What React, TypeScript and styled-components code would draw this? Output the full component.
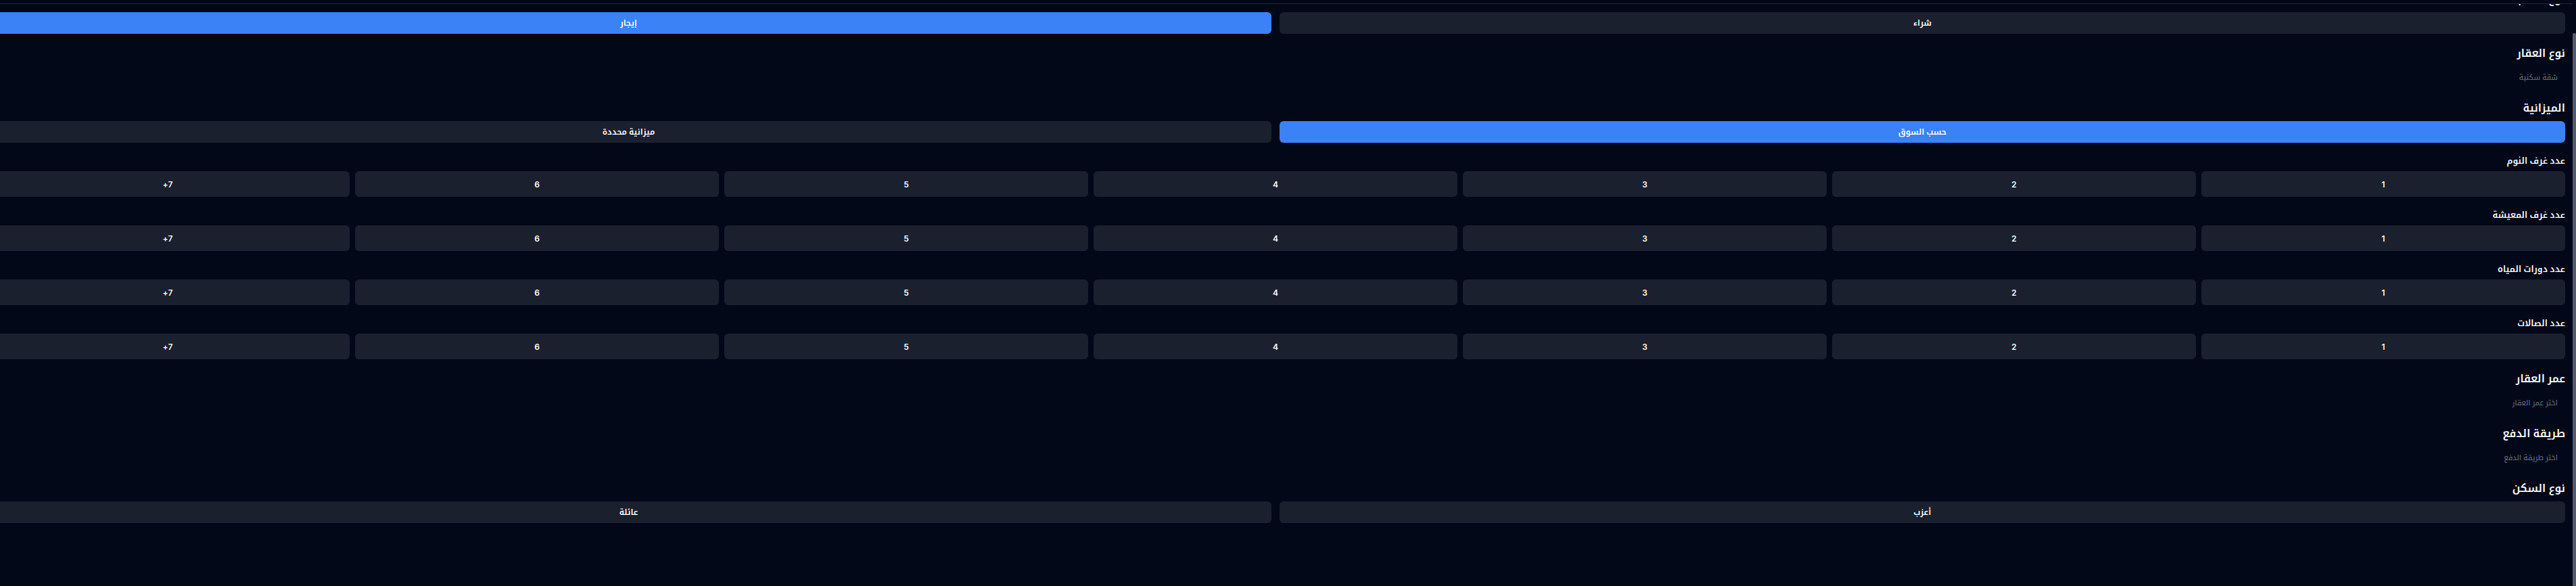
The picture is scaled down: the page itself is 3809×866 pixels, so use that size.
import { useLayoutEffect, useRef, useState } from 'react';
import styled, { createGlobalStyle } from 'styled-components';

const COUNTS = ['1', '2', '3', '4', '5', '6', '7+'];

const ROOM_FIELDS = [
    { key: 'bedrooms', label: 'عدد غرف النوم' },
    { key: 'livingRooms', label: 'عدد غرف المعيشة' },
    { key: 'bathrooms', label: 'عدد دورات المياه' },
    { key: 'halls', label: 'عدد الصالات' },
];

const App = () => {
    const scrollRef = useRef<HTMLDivElement>(null);
    const [deal, setDeal] = useState('rent');
    const [budget, setBudget] = useState('market');
    const [housing, setHousing] = useState('');
    const [rooms, setRooms] = useState<Record<string, string>>({});
    const [thumb, setThumb] = useState({ top: 0, height: 0 });

    const syncThumb = () => {
        const el = scrollRef.current;
        if (!el) return;
        const ratio = el.clientHeight / el.scrollHeight;
        setThumb({ top: el.scrollTop * ratio, height: el.clientHeight * ratio });
    };

    // the panel is shown scrolled all the way down
    useLayoutEffect(() => {
        if (scrollRef.current) scrollRef.current.scrollTop = scrollRef.current.scrollHeight;
        syncThumb();
    }, []);

    return (
        <>
            <GlobalStyle />
            <Frame>
                <Panel ref={scrollRef} onScroll={syncThumb}>
                    <PanelHeader />
                    <Content dir="rtl">
                        <Form>
                            <Section>
                                <Title>نوع الطلب</Title>
                                <OptionGrid $cols={2} $gap={12}>
                                    <OptionButton $active={deal === 'buy'} onClick={() => setDeal('buy')}>شراء</OptionButton>
                                    <OptionButton $active={deal === 'rent'} onClick={() => setDeal('rent')}>إيجار</OptionButton>
                                </OptionGrid>
                            </Section>

                            <Section>
                                <Title>نوع العقار</Title>
                                <SelectTrigger>شقة سكنية</SelectTrigger>
                            </Section>

                            <Section>
                                <Title>الميزانية</Title>
                                <OptionGrid $cols={2} $gap={12}>
                                    <OptionButton $active={budget === 'market'} onClick={() => setBudget('market')}>حسب السوق</OptionButton>
                                    <OptionButton $active={budget === 'fixed'} onClick={() => setBudget('fixed')}>ميزانية محددة</OptionButton>
                                </OptionGrid>
                            </Section>

                            {ROOM_FIELDS.map(field => (
                                <Section key={field.key} $tight>
                                    <SubTitle>{field.label}</SubTitle>
                                    <OptionGrid $cols={7} $gap={8}>
                                        {COUNTS.map(n => (
                                            <OptionButton
                                                key={n}
                                                $tall
                                                $active={rooms[field.key] === n}
                                                onClick={() => setRooms({ ...rooms, [field.key]: n })}
                                            >
                                                {n}
                                            </OptionButton>
                                        ))}
                                    </OptionGrid>
                                </Section>
                            ))}

                            <Section>
                                <Title>عمر العقار</Title>
                                <SelectTrigger>اختر عمر العقار</SelectTrigger>
                            </Section>

                            <Section>
                                <Title>طريقة الدفع</Title>
                                <SelectTrigger>اختر طريقة الدفع</SelectTrigger>
                            </Section>

                            <Section>
                                <Title>نوع السكن</Title>
                                <OptionGrid $cols={2} $gap={12}>
                                    <OptionButton $active={housing === 'single'} onClick={() => setHousing('single')}>أعزب</OptionButton>
                                    <OptionButton $active={housing === 'family'} onClick={() => setHousing('family')}>عائلة</OptionButton>
                                </OptionGrid>
                            </Section>
                        </Form>
                    </Content>
                </Panel>
                <ScrollRail>
                    <ScrollThumb style={{ marginTop: thumb.top, height: thumb.height }} />
                </ScrollRail>
            </Frame>
        </>
    );
};

const GlobalStyle = createGlobalStyle`
    * { box-sizing: border-box; }
    html, body {
        margin: 0;
        padding: 0;
        overflow: hidden;
        background: #020817;
    }
    body {
        font-family: Inter, "Noto Kufi Arabic", "Noto Sans Arabic", "Noto Sans", "DejaVu Sans", sans-serif;
        color: #f8fafc;
    }
`;

const Frame = styled.div`
    display: flex;
    height: 100vh;
    background: #020817;
`;

const Panel = styled.div`
    flex: 1;
    min-width: 0;
    overflow-y: auto;
    overflow-x: hidden;
    scrollbar-width: none;

    &::-webkit-scrollbar {
        display: none;
    }
`;

const ScrollRail = styled.div`
    width: 5px;
    flex-shrink: 0;
    display: flex;
    flex-direction: column;
`;

const ScrollThumb = styled.div`
    width: 100%;
    background: #525c6d;
    border-radius: 2px 2px 0 0;
`;

const PanelHeader = styled.div`
    position: sticky;
    top: 0;
    z-index: 2;
    height: 6px;
    background: #020817;
    border-bottom: 1px solid #1e2533;
`;

const Content = styled.div`
    direction: rtl;
    padding: 32px 11px 93px;
`;

const Form = styled.div`
    width: calc(100% + 32px);
    display: flex;
    flex-direction: column;
    gap: 16px;
`;

const Section = styled.div<{ $tight?: boolean }>`
    display: flex;
    flex-direction: column;
    gap: ${p => (p.$tight ? '6px' : '8px')};
`;

const Title = styled.h3`
    margin: 0;
    font-size: 16px;
    line-height: 24px;
    font-weight: 600;
    color: #f8fafc;
`;

const SubTitle = styled.h4`
    margin: 0;
    font-size: 13px;
    line-height: 20px;
    font-weight: 600;
    color: #f8fafc;
`;

const OptionGrid = styled.div<{ $cols: number; $gap: number }>`
    display: grid;
    grid-template-columns: repeat(${p => p.$cols}, 1fr);
    gap: ${p => p.$gap}px;
`;

const OptionButton = styled.button<{ $active?: boolean; $tall?: boolean }>`
    height: ${p => (p.$tall ? '38px' : '32px')};
    border: none;
    border-radius: 6px;
    padding: 0 12px;
    background: ${p => (p.$active ? '#3b82f6' : '#1b202e')};
    color: #ffffff;
    font-family: inherit;
    font-size: 12px;
    font-weight: 600;
    cursor: pointer;
`;

const SelectTrigger = styled.div`
    height: 33px;
    display: flex;
    align-items: center;
    padding: 0 11px;
    font-size: 11px;
    color: #6b7280;
`;

export default App;
